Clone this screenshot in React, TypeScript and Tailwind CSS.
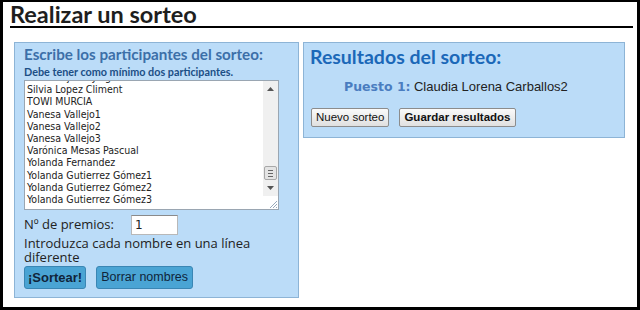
const names = [
  "Raul Berjuelo Jorge",
  "Silvia Lopez Climent",
  "TOWI MURCIA",
  "Vanesa Vallejo1",
  "Vanesa Vallejo2",
  "Vanesa Vallejo3",
  "Varónica Mesas Pascual",
  "Yolanda Fernandez",
  "Yolanda Gutierrez Gómez1",
  "Yolanda Gutierrez Gómez2",
  "Yolanda Gutierrez Gómez3",
];

function FakeScrollbar() {
  return (
    <div className="absolute right-0 top-0 bottom-0 w-[15px] bg-[#f0f0f0] flex flex-col items-center">
      <div className="h-[16px] w-full flex items-center justify-center">
        <svg width="7" height="4" viewBox="0 0 7 4">
          <path d="M0 4 L3.5 0 L7 4 Z" fill="#555" />
        </svg>
      </div>
      <div className="flex-1" />
      <div className="w-[13px] h-[14px] bg-[#e4e4e4] border border-[#a8a8a8] rounded-[2px] flex flex-col items-center justify-center gap-[2px]">
        <div className="w-[5px] h-px bg-[#666]" />
        <div className="w-[5px] h-px bg-[#666]" />
        <div className="w-[5px] h-px bg-[#666]" />
      </div>
      <div className="h-[16px] w-full flex items-center justify-center">
        <svg width="7" height="4" viewBox="0 0 7 4">
          <path d="M0 0 L3.5 4 L7 0 Z" fill="#555" />
        </svg>
      </div>
      <div className="h-[13px] w-full bg-white relative">
        <svg className="absolute right-[1px] bottom-[1px]" width="8" height="8" viewBox="0 0 8 8">
          <path d="M8 1 L1 8 M8 4 L4 8 M8 7 L7 8" stroke="#9ab" strokeWidth="1" />
        </svg>
      </div>
    </div>
  );
}

export default function App() {
  return (
    <div className="w-[640px] h-[310px] bg-white border-l-[3px] border-r-[3px] border-t-[2px] border-b-[3px] border-black overflow-hidden font-['Lato',sans-serif] text-[#222]">
      <div className="pl-[7px] pr-[4px]">
        <h1 className="text-[23.5px] leading-[25px] font-bold text-[#1e1e1e] h-[24px]">Realizar un sorteo</h1>
        <div className="h-[2px] bg-black" />
      </div>

      <div className="flex items-start gap-[4px] pl-[11px] pt-[14px]">
        <div className="w-[285px] h-[256px] bg-[#bbdcf8] border border-[#8db4d6] pl-[9px] pt-[2px]">
          <h2 className="text-[15.2px] font-bold text-[#3c6fa8] leading-[18px]">Escribe los participantes del sorteo:</h2>
          <p className="text-[10.8px] font-bold text-[#1c4f86] leading-[13px] mt-[2px]">Debe tener como mínimo dos participantes.</p>

          <div className="relative w-[255px] h-[130px] bg-white border border-[#9aa6b2] overflow-hidden mt-[2px]">
            <div className="pl-[2px] -mt-[10px] font-['DejaVu_Sans',sans-serif] font-stretch-condensed text-[10.5px] leading-[12.2px] text-[#222]">
              {names.map(n => (
                <div key={n}>{n}</div>
              ))}
            </div>
            <FakeScrollbar />
          </div>

          <div className="flex items-center mt-[5px] font-['Open_Sans',sans-serif] text-[13px] text-[#222]">
            <span className="w-[107px]">Nº de premios:</span>
            <div className="w-[47px] h-[20px] bg-white border border-[#b8b8b8] border-t-[#8a8a8a] pl-[3px] text-[12px] leading-[18px] font-['DejaVu_Sans',sans-serif]">1</div>
          </div>
          <p className="font-['Open_Sans',sans-serif] text-[13px] leading-[14px] text-[#222] mt-[1px] w-[240px]">
            Introduzca cada nombre en una línea diferente
          </p>
          <div className="flex gap-[10px] mt-[2px] font-['Liberation_Sans',sans-serif] text-[#10243a]">
            <button className="h-[23px] px-[3px] bg-[#4aa4d4] border border-[#3a86b4] rounded-[3px] text-[13px] font-bold">¡Sortear!</button>
            <button className="h-[23px] px-[4px] bg-[#4aa4d4] border border-[#3a86b4] rounded-[3px] text-[12.5px]">Borrar nombres</button>
          </div>
        </div>

        <div className="w-[322px] h-[96px] bg-[#bbdcf8] border border-[#8db4d6] pl-[6px] pt-[3px]">
          <h2 className="text-[19.5px] font-bold text-[#1b68b8] leading-[22px]">Resultados del sorteo:</h2>
          <div className="pl-[34px] mt-[10px] text-[13px] leading-[16px]">
            <span className="font-bold text-[#4a7dc0] font-['DejaVu_Sans',sans-serif] text-[12.5px]">Puesto 1:</span>{" "}
            <span className="font-['Liberation_Sans',sans-serif] text-[#222]">Claudia Lorena Carballos2</span>
          </div>
          <div className="flex gap-[10px] mt-[13px] ml-[1px] font-['Liberation_Sans',sans-serif] text-[11.5px] text-[#111]">
            <button className="h-[19px] px-[4px] bg-gradient-to-b from-[#fafafa] to-[#e0e0e0] border border-[#8c8c8c] rounded-[2px]">Nuevo sorteo</button>
            <button className="h-[19px] px-[4px] bg-gradient-to-b from-[#fafafa] to-[#e0e0e0] border border-[#8c8c8c] rounded-[2px] font-bold">Guardar resultados</button>
          </div>
        </div>
      </div>
    </div>
  );
}
